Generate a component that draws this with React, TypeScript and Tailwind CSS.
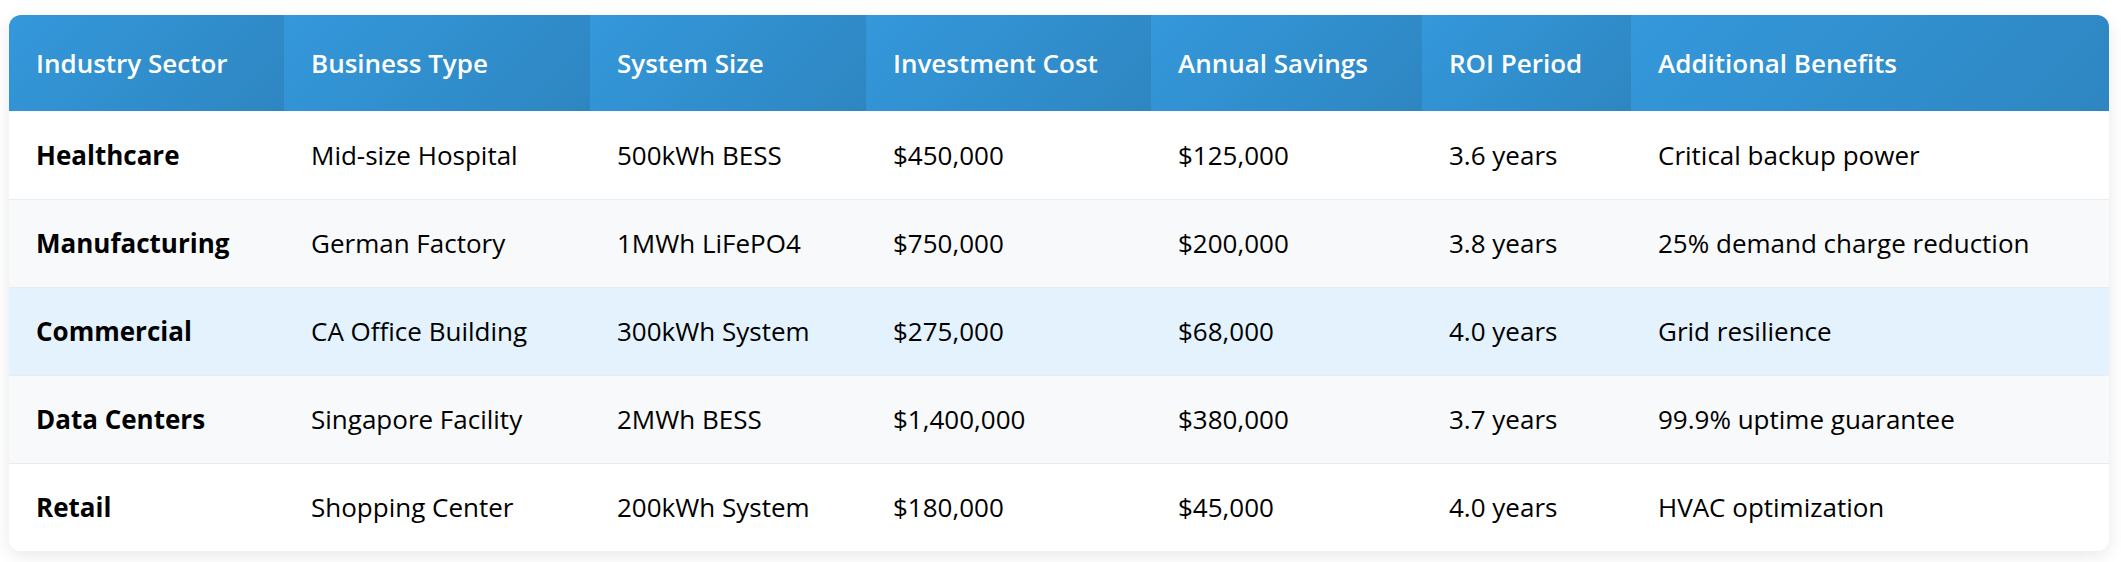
const headers = [
  "Industry Sector",
  "Business Type",
  "System Size",
  "Investment Cost",
  "Annual Savings",
  "ROI Period",
  "Additional Benefits",
];

const rows = [
  ["Healthcare", "Mid-size Hospital", "500kWh BESS", "$450,000", "$125,000", "3.6 years", "Critical backup power"],
  ["Manufacturing", "German Factory", "1MWh LiFePO4", "$750,000", "$200,000", "3.8 years", "25% demand charge reduction"],
  ["Commercial", "CA Office Building", "300kWh System", "$275,000", "$68,000", "4.0 years", "Grid resilience"],
  ["Data Centers", "Singapore Facility", "2MWh BESS", "$1,400,000", "$380,000", "3.7 years", "99.9% uptime guarantee"],
  ["Retail", "Shopping Center", "200kWh System", "$180,000", "$45,000", "4.0 years", "HVAC optimization"],
];

const rowBg = ["bg-white", "bg-[#f8f9fa]", "bg-[#e3f2fd]", "bg-[#f8f9fa]", "bg-white"];

export default function App() {
  return (
    <div className="min-h-screen bg-white px-[9px] pt-[15px] font-['Open_Sans',sans-serif]">
      <div className="w-[2100px] overflow-hidden rounded-[12px] bg-white shadow-[0_5px_18px_rgba(0,0,0,0.09)]">
        <table className="w-full table-fixed border-collapse text-left">
          <colgroup>
            <col className="w-[275px]" />
            <col className="w-[306px]" />
            <col className="w-[276px]" />
            <col className="w-[285px]" />
            <col className="w-[271px]" />
            <col className="w-[209px]" />
            <col />
          </colgroup>
          <thead>
            <tr>
              {headers.map((h) => (
                <th
                  key={h}
                  className="h-[96px] bg-linear-135 from-[#3498db] to-[#2e86c1] px-[27px] align-middle text-[26px] font-semibold leading-[34px] text-white"
                >
                  {h}
                </th>
              ))}
            </tr>
          </thead>
          <tbody>
            {rows.map((r, i) => (
              <tr key={r[0]} className={`${rowBg[i]} ${i < rows.length - 1 ? "border-b border-[#ececec]" : ""}`}>
                {r.map((c, j) => (
                  <td
                    key={j}
                    className={`h-[88px] px-[27px] align-middle text-[26px] leading-[34px] text-black ${
                      j === 0 ? "font-bold" : "font-normal"
                    }`}
                  >
                    {c}
                  </td>
                ))}
              </tr>
            ))}
          </tbody>
        </table>
      </div>
    </div>
  );
}
